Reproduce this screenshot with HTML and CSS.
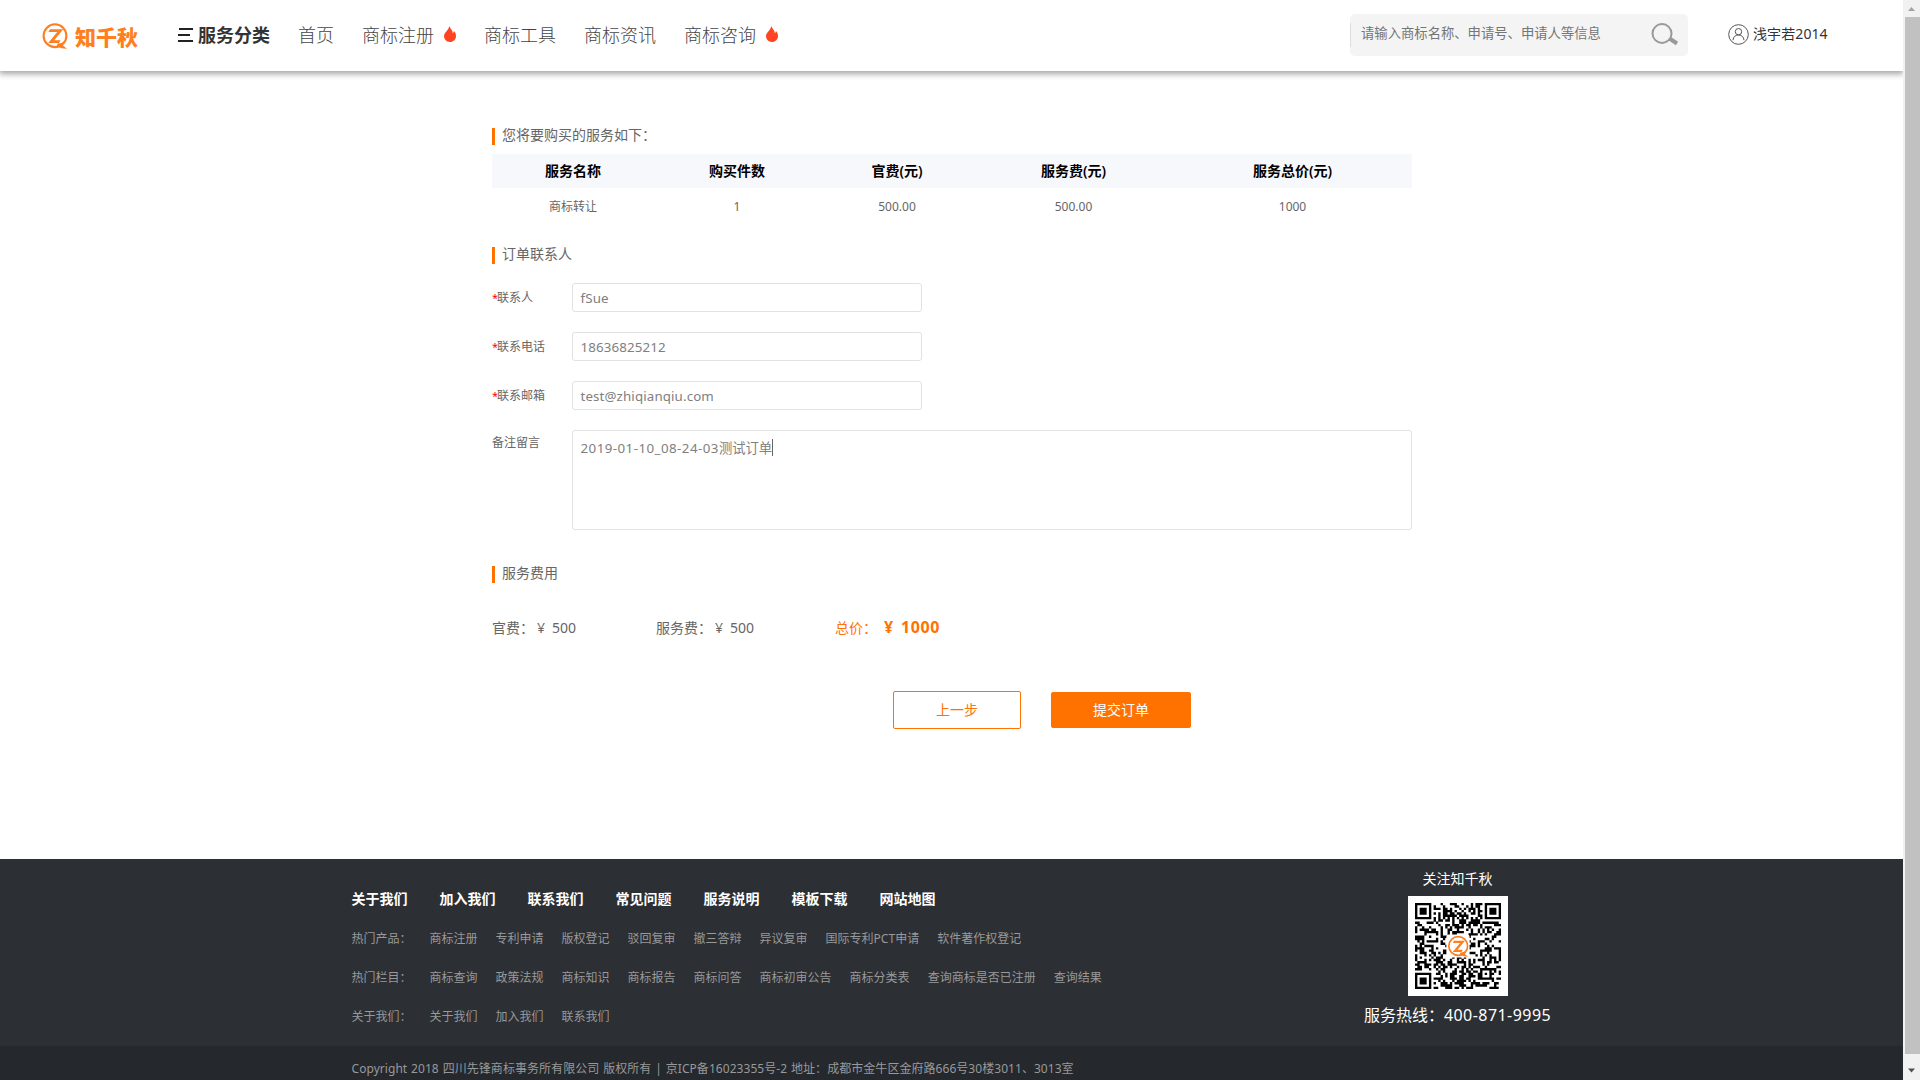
FILE: index.html
```html
<!DOCTYPE html>
<html lang="zh-CN">
<head>
<meta charset="utf-8">
<title>知千秋</title>
<link rel="stylesheet" href="styles.css">
</head>
<body>
<svg class="defs" aria-hidden="true">
  <symbol id="mark" viewBox="0 0 26 26">
    <circle cx="13" cy="12.7" r="11.4" fill="none" stroke="#ff7f20" stroke-width="2.1"/>
    <path d="M8 6.3H21.2L12.2 17.2H18.6L17 20H6.2L15.2 9H6.4Z" fill="#ff7f20"/>
    <path d="M15.5 20.5Q19 21 22 18.5L21 22.5L25 25.8Q20 26 15 23.5Z" fill="#ff7f20"/>
  </symbol>
  <symbol id="flame" viewBox="0 0 12 16">
    <path d="M5.4 0C6.1 2.7 9.2 4.6 8.7 7.4C9.5 6.8 9.8 6 9.9 5.1C11.3 6.5 12 8.200 12 10C12 13.500 9.300 16 6 16C2.600 16 0 13.500 0 10.100C0 6.900 4.500 4.200 5.400 0Z" fill="#ff4422"/>
  </symbol>
</svg>
<div class="window">
  <div class="page">
    <header class="header">
      <a class="logo"><svg class="logo-mark"><use href="#mark"/></svg><span class="logo-text">知千秋</span></a>
      <nav class="nav">
        <a class="category"><svg width="15" height="14" viewBox="0 0 15 14"><path d="M1 1H15M0 7H12M0 13H15" stroke="#222" stroke-width="2"/></svg>服务分类</a>
        <a>首页</a>
        <a class="hot">商标注册<svg class="flame"><use href="#flame"/></svg></a>
        <a>商标工具</a>
        <a>商标资讯</a>
        <a class="hot">商标咨询<svg class="flame"><use href="#flame"/></svg></a>
      </nav>
      <div class="search">
        <b class="divider"></b>
        <span>请输入商标名称、申请号、申请人等信息</span>
        <svg width="28" height="24" viewBox="0 0 28 24"><ellipse cx="11" cy="10.500" rx="9.500" ry="9.400" fill="none" stroke="#999" stroke-width="2"/><path d="M18.500 15.500L26 20.500" stroke="#999" stroke-width="4"/></svg>
      </div>
      <a class="user"><svg width="21" height="21" viewBox="0 0 21 21" fill="none" stroke="#555"><circle cx="10.500" cy="10.500" r="9.800"/><circle cx="10.500" cy="7.700" r="3.200"/><path d="M5 16.200C5.200 12.800 7.400 11 10.500 11S15.800 12.800 16 16.200"/></svg><span>浅宇若2014</span></a>
    </header>

    <main class="main">
      <h2 class="title">您将要购买的服务如下：</h2>
      <div class="table">
        <div class="row head"><span>服务名称</span><span>购买件数</span><span>官费(元)</span><span>服务费(元)</span><span>服务总价(元)</span></div>
        <div class="row"><span>商标转让</span><span>1</span><span>500.00</span><span>500.00</span><span>1000</span></div>
      </div>

      <h2 class="title contact">订单联系人</h2>
      <div class="form">
        <div class="field"><label><i>*</i>联系人</label><div class="input">fSue</div></div>
        <div class="field"><label><i>*</i>联系电话</label><div class="input">18636825212</div></div>
        <div class="field"><label><i>*</i>联系邮箱</label><div class="input">test@zhiqianqiu.com</div></div>
        <div class="field note"><label>备注留言</label><div class="input area"><span class="stamp">2019-01-10_08-24-03</span>测试订单<b class="caret"></b></div></div>
      </div>

      <h2 class="title cost">服务费用</h2>
      <div class="fees">
        <span class="official">官费：<i class="yen">¥</i>500</span>
        <span class="service">服务费：<i class="yen">¥</i>500</span>
        <span class="total">总价：<strong><i class="yen">¥</i>1000</strong></span>
      </div>
      <div class="actions"><a class="btn back">上一步</a><a class="btn submit">提交订单</a></div>
    </main>

    <footer class="footer">
      <div class="links">
        <div class="line main-links"><a>关于我们</a><a>加入我们</a><a>联系我们</a><a>常见问题</a><a>服务说明</a><a>模板下载</a><a>网站地图</a></div>
        <div class="line"><span>热门产品：</span><a>商标注册</a><a>专利申请</a><a>版权登记</a><a>驳回复审</a><a>撤三答辩</a><a>异议复审</a><a>国际专利PCT申请</a><a>软件著作权登记</a></div>
        <div class="line"><span>热门栏目：</span><a>商标查询</a><a>政策法规</a><a>商标知识</a><a>商标报告</a><a>商标问答</a><a>商标初审公告</a><a>商标分类表</a><a>查询商标是否已注册</a><a>查询结果</a></div>
        <div class="line"><span>关于我们：</span><a>关于我们</a><a>加入我们</a><a>联系我们</a></div>
      </div>
      <div class="follow">
        <div class="follow-title">关注知千秋</div>
        <div class="qr">
          <svg width="86" height="86" viewBox="0 0 37 37">
            <path id="modules" fill="#000"/>
            <rect x="13.500" y="13.500" width="10" height="10" rx="1" fill="#fff"/>
            <use href="#mark" x="14" y="14" width="9.200" height="9.200"/>
          </svg>
        </div>
        <div class="hotline">服务热线：<span class="phone">400-871-9995</span></div>
      </div>
    </footer>
    <div class="copyright">Copyright 2018 四川先锋商标事务所有限公司 版权所有 | 京ICP备16023355号-2 地址：成都市金牛区金府路666号30楼3011、3013室</div>
  </div>
  <div class="scrollbar">
    <svg width="17" height="17" viewBox="0 0 17 17"><path d="M5 11H12L8.500 7Z" fill="#a3a3a3"/></svg>
    <div class="thumb"></div>
    <svg width="17" height="17" viewBox="0 0 17 17"><path d="M5 5.500H12L8.500 9.500Z" fill="#505050"/></svg>
  </div>
</div>
<script src="qr.js"></script>
</body>
</html>
```
FILE: styles.css
```css
* { box-sizing: border-box; }
body { margin: 0; background: #fff; color: #666; font-family: "Noto Sans", "Noto Sans CJK SC", sans-serif; font-size: 14px; overflow: hidden; }
i { font-style: normal; }
svg { display: block; flex: none; }
a, span, label { white-space: nowrap; }
.defs { width: 0; height: 0; position: absolute; }
.window { display: flex; width: 1920px; height: 1080px; }
.page { width: 1903px; flex: none; display: flex; flex-direction: column; }

.header { flex: none; height: 71px; display: flex; background: #fff; box-shadow: 0 2px 6px 1px rgba(0, 0, 0, .36); clip-path: inset(0 0 -14px 0); }
.logo { display: flex; width: 136px; margin-left: 42px; padding-top: 23px; }
.logo-mark { width: 26px; height: 26px; }
.logo-text { margin-left: 7px; color: #ff7f20; font: 900 21px/27px "Noto Sans CJK SC", sans-serif; }
.nav { display: flex; width: 1172px; color: #444; font-size: 18px; font-weight: 300; line-height: 70px; }
.nav a { margin-right: 28px; height: 70px; }
.nav .category { display: flex; width: 92px; align-items: center; gap: 5px; font-weight: 700; color: #333; }
.nav .hot { display: flex; align-items: center; gap: 10px; }
.flame { width: 12px; height: 16px; margin-top: -2px; }
.search { display: flex; align-items: flex-start; width: 338px; height: 42px; margin-top: 14px; padding: 9px 9px 0 0; border-radius: 5px; background: #f4f4f4; color: #757575; font-size: 13.333px; line-height: 20px; }
.search svg { margin-left: auto; }
.divider { width: 1px; height: 24px; margin-right: 10px; background: #ddd; }
.user { display: flex; align-items: center; gap: 4px; height: 21px; margin: 24px 0 0 40px; color: #333; letter-spacing: .1px; }
.user span { height: 21px; line-height: 19px; }

.main { flex: none; width: 920px; height: 788px; margin-left: 492px; padding-top: 54px; }
.title { display: flex; gap: 7px; margin: 0; height: 21px; font-size: 14px; font-weight: 400; line-height: 19px; }
.title::before { content: ""; width: 3px; height: 17px; margin-top: 3px; background: #ff7200; }
.table { margin-top: 8px; }
.row { display: grid; grid-template-columns: 162px 166px 154px 199px 239px; height: 36px; line-height: 38px; text-align: center; font-size: 12px; }
.head { height: 34px; line-height: 34px; background: #f7f8fc; color: #000; font-size: 14px; font-weight: 600; }
.contact { margin-top: 20px; }
.form { display: flex; flex-direction: column; gap: 20px; margin-top: 18px; }
.field { display: flex; height: 29px; }
.field label { width: 80px; font-size: 12px; line-height: 30px; }
.field label i { display: inline-block; width: 5px; color: #f00; font-size: 11px; }
.input { width: 350px; border: 1px solid #e2e2e2; border-radius: 3px; padding-left: 7.500px; color: #808080; font-size: 13.333px; line-height: 28px; letter-spacing: .12px; }
.note { height: 100px; }
.note label { line-height: 26px; }
.area { display: flex; width: 840px; padding-top: 8px; line-height: 18px; letter-spacing: 0; }
.stamp { letter-spacing: .45px; }
.caret { width: 1px; height: 17px; background: #666; }
.cost { margin-top: 33px; }
.fees { display: grid; grid-template-columns: 164px 179px auto; margin-top: 33px; height: 22px; line-height: 22px; }
.yen { display: inline-block; width: 14px; margin-right: 4px; text-align: center; }
.total { color: #ff7200; }
.total strong { margin-left: 4px; font-size: 16px; line-height: 20px; letter-spacing: .6px; }
.total .yen { width: 16px; }
.actions { display: flex; align-items: center; gap: 30px; height: 38px; margin: 52px 0 0 401px; }
.btn { width: 128px; height: 38px; border: 1px solid #ff7200; border-radius: 2px; color: #ff7200; text-align: center; line-height: 36px; }
.submit { width: 140px; height: 36px; background: #ff7200; color: #fff; line-height: 34px; }

.footer { flex: none; display: flex; height: 187px; padding-left: 351.500px; background: #2c2f34; color: #999; font-size: 12px; }
.links { width: 1012.500px; padding-top: 21px; }
.line { display: flex; gap: 18px; height: 39px; line-height: 39px; }
.main-links { gap: 32px; color: #fff; font-size: 14px; font-weight: 600; line-height: 37px; }
.follow { display: flex; flex-direction: column; align-items: center; width: 187px; color: #fff; }
.follow-title { margin-top: 10px; height: 20px; font-size: 14px; line-height: 20px; }
.qr { width: 100px; height: 100px; margin-top: 7px; padding: 7px; background: #fff; }
.hotline { margin-top: 7px; font-size: 16px; line-height: 24px; white-space: nowrap; }
.phone { letter-spacing: .45px; }
.copyright { flex: none; height: 34px; padding: 13px 0 0 351.500px; background: #25282d; color: #999; font-size: 12px; line-height: 20px; letter-spacing: .05px; word-spacing: .7px; white-space: nowrap; }

.scrollbar { display: flex; flex-direction: column; width: 17px; height: 1080px; background: #f1f1f1; }
.thumb { width: 15px; height: 1037px; margin: 0 0 9px 2px; background: #c1c1c1; }
```
FILE: qr.js
```js
const size = 37;
const finders = [[0, 0], [30, 0], [0, 30]];
let seed = 20190110;
const next = () => (seed = (seed * 1103515245 + 12345) % 2147483648) / 2147483648;

function dark(x, y) {
  const noise = next() < 0.52;
  for (const [fx, fy] of finders) {
    const d = Math.max(Math.abs(x - fx - 3), Math.abs(y - fy - 3));
    if (d <= 4) return d < 2 || d === 3;
  }
  const a = Math.max(Math.abs(x - 30), Math.abs(y - 30));
  if (a <= 2) return a !== 1;
  if (x === 6 || y === 6) return (x + y) % 2 === 0;
  return noise;
}

let path = "";
for (let y = 0; y < size; y++) {
  for (let x = 0; x < size; x++) {
    if (dark(x, y)) path += `M${x} ${y}h1.02v1.02h-1.02z`;
  }
}
document.getElementById("modules").setAttribute("d", path);
```
